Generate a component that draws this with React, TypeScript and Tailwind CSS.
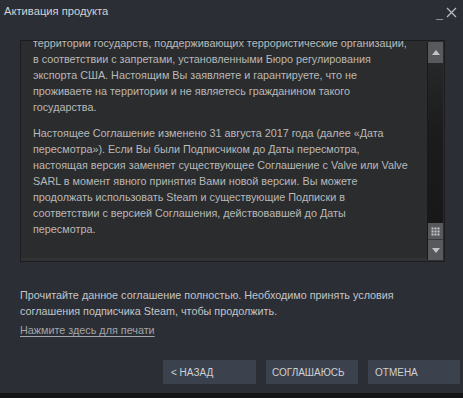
import React from "react";

const p1 = [
  "территории государств, поддерживающих террористические организации,",
  "в соответствии с запретами, установленными Бюро регулирования",
  "экспорта США. Настоящим Вы заявляете и гарантируете, что не",
  "проживаете на территории и не являетесь гражданином такого",
  "государства.",
];
const p2 = [
  "Настоящее Соглашение изменено 31 августа 2017 года (далее «Дата",
  "пересмотра»). Если Вы были Подписчиком до Даты пересмотра,",
  "настоящая версия заменяет существующее Соглашение с Valve или Valve",
  "SARL в момент явного принятия Вами новой версии. Вы можете",
  "продолжать использовать Steam и существующие Подписки в",
  "соответствии с версией Соглашения, действовавшей до Даты",
  "пересмотра.",
];

function Grip() {
  return (
    <svg width="9" height="9" viewBox="0 0 9 9">
      {[0, 3, 6].map((y) =>
        [0, 3, 6].map((x) => (
          <rect key={`${x}-${y}`} x={x + 0.5} y={y + 0.5} width="2" height="2" fill="#c8c8c8" />
        ))
      )}
    </svg>
  );
}

export default function App() {
  return (
    <div
      className="w-[463px] h-[398px] bg-[#2b2e35] flex flex-col overflow-hidden text-[10.8px]"
      style={{ fontFamily: '"Liberation Sans", Arial, sans-serif' }}
    >
      <div className="h-[24px] flex items-center justify-between pl-[4px] pr-[6px] text-[#d2d2d2] text-[11.2px]">
        <span className="mt-[-1px]">Активация продукта</span>
        <div className="flex items-center gap-[3px] text-[#9a9ca0]">
          <span className="text-[12px] leading-none mt-[2px]">_</span>
          <svg width="11" height="11" viewBox="0 0 11 11">
            <path d="M1 1 L10 10 M10 1 L1 10" stroke="#b8babd" strokeWidth="1.3" />
          </svg>
        </div>
      </div>

      <div className="ml-[20px] mt-[16px] w-[425px] h-[222px] border border-[#1b1c1e] bg-[#2b2c2e] flex shadow-[inset_0_-3px_0_#303234]">
        <div className="flex-1 overflow-hidden pl-[12px] text-[#b9b9b9] leading-[16px]">
          <div className="mt-[-6px]">
            {p1.map((l, i) => (
              <div key={i} className="whitespace-nowrap">{l}</div>
            ))}
          </div>
          <div className="mt-[10px]">
            {p2.map((l, i) => (
              <div key={i} className="whitespace-nowrap">{l}</div>
            ))}
          </div>
        </div>
        <div className="w-[16px] flex flex-col bg-[linear-gradient(#2a2b2d,#1c1c1c_40%,#161616)] border-l border-[#1a1a1a] my-[1px] mr-[1px]">
          <div className="h-[21px] bg-[#58595c] flex items-center justify-center">
            <svg width="8" height="5" viewBox="0 0 8 5">
              <path d="M0 5 L4 0 L8 5 Z" fill="#c4c4c4" />
            </svg>
          </div>
          <div className="flex-1" />
          <div className="h-[17px] bg-[#58595c] flex items-center justify-center border-b border-[#3a3b3d]">
            <Grip />
          </div>
          <div className="h-[20px] bg-[#58595c] flex items-center justify-center">
            <svg width="8" height="5" viewBox="0 0 8 5">
              <path d="M0 0 L4 5 L8 0 Z" fill="#c4c4c4" />
            </svg>
          </div>
        </div>
      </div>

      <div className="ml-[20px] mt-[25px] text-[#c4c5c7] leading-[16px]">
        <div>Прочитайте данное соглашение полностью. Необходимо принять условия</div>
        <div>соглашения подписчика Steam, чтобы продолжить.</div>
        <div className="mt-[3px] text-[#a3a5a8] underline underline-offset-2">Нажмите здесь для печати</div>
      </div>

      <div className="mt-[22px] flex justify-end gap-[10px] pr-[3px]">
        <button className="w-[93px] h-[24px] bg-[#3c424d] text-[#cfd0d2] text-[10px] text-left pl-[8px]">
          &lt; НАЗАД
        </button>
        <button className="w-[92px] h-[24px] bg-[#3c424d] text-[#cfd0d2] text-[10px] text-left pl-[6px]">
          СОГЛАШАЮСЬ
        </button>
        <button className="w-[92px] h-[24px] bg-[#3c424d] text-[#cfd0d2] text-[10px] text-left pl-[7px]">
          ОТМЕНА
        </button>
      </div>
      <div className="mt-auto h-[5px] bg-[#141517]" />
    </div>
  );
}
